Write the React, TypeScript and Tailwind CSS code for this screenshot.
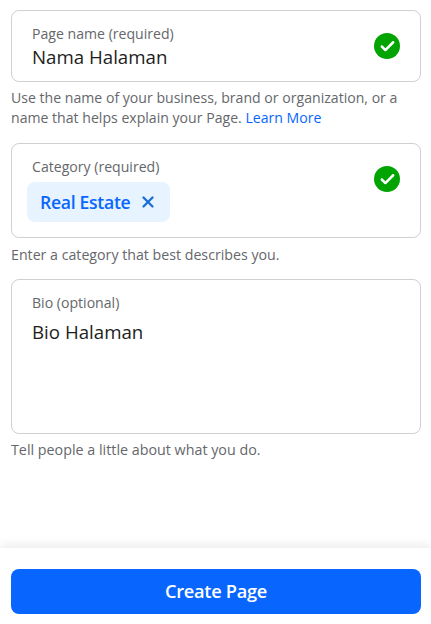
import { Check, X } from "lucide-react";

function CheckBadge() {
  return (
    <div className="flex size-[26px] items-center justify-center rounded-full bg-[#01a400]">
      <Check className="size-[17px] text-white" strokeWidth={3.5} />
    </div>
  );
}

export default function App() {
  return (
    <div className="flex h-[624px] w-[431px] flex-col overflow-hidden bg-white font-['Open_Sans',sans-serif] text-[#65676b]">
      <div className="flex flex-1 flex-col pl-[11px] pr-[10px] pt-[10px]">
        <div className="flex h-[72px] items-center justify-between rounded-lg border border-[#ced0d4] px-[20px]">
          <div className="flex flex-col pt-[2px]">
            <span className="text-[14.1px] leading-[18px]">Page name (required)</span>
            <span className="mt-[2px] text-[18.7px] leading-[24px] text-[#1c1e21]">Nama Halaman</span>
          </div>
          <CheckBadge />
        </div>
        <p className="mt-[6px] text-[14.1px] leading-[20px]">
          Use the name of your business, brand or organization, or a name that helps explain your Page.{" "}
          <span className="text-[#0866ff]">Learn More</span>
        </p>

        <div className="mt-[15px] flex h-[95px] justify-between rounded-lg border border-[#ced0d4] pl-[15px] pr-[20px] pt-[14px]">
          <div className="flex flex-col items-start">
            <span className="pl-[5px] text-[14.1px] leading-[18px]">Category (required)</span>
            <div className="mt-[6px] flex h-10 items-center gap-[9px] rounded-lg bg-[#e7f3ff] px-[13px] text-[17.6px] font-semibold tracking-[-0.3px] text-[#0866ff]">
              Real Estate
              <X className="size-[18px] text-[#1a6ed8]" strokeWidth={3} />
            </div>
          </div>
          <div className="pt-[8px]">
            <CheckBadge />
          </div>
        </div>
        <p className="mt-[7px] text-[14.2px] leading-[20px]">Enter a category that best describes you.</p>

        <div className="mt-[14px] flex h-[155px] flex-col rounded-lg border border-[#ced0d4] px-[20px] pt-[14px]">
          <span className="text-[14.1px] leading-[18px]">Bio (optional)</span>
          <span className="mt-[8px] text-[18.7px] leading-[24px] text-[#1c1e21]">Bio Halaman</span>
        </div>
        <p className="mt-[6px] text-[14.3px] leading-[20px]">Tell people a little about what you do.</p>
      </div>

      <div className="h-[76px] bg-white pl-[11px] pr-[10px] pt-[21px] shadow-[0_-3px_9px_rgba(0,0,0,0.08)]">
        <button className="flex h-[45px] w-full items-center justify-center rounded-lg bg-[#0866ff] pt-[1px] text-[18.2px] font-semibold tracking-[-0.3px] text-white">
          Create Page
        </button>
      </div>
    </div>
  );
}
